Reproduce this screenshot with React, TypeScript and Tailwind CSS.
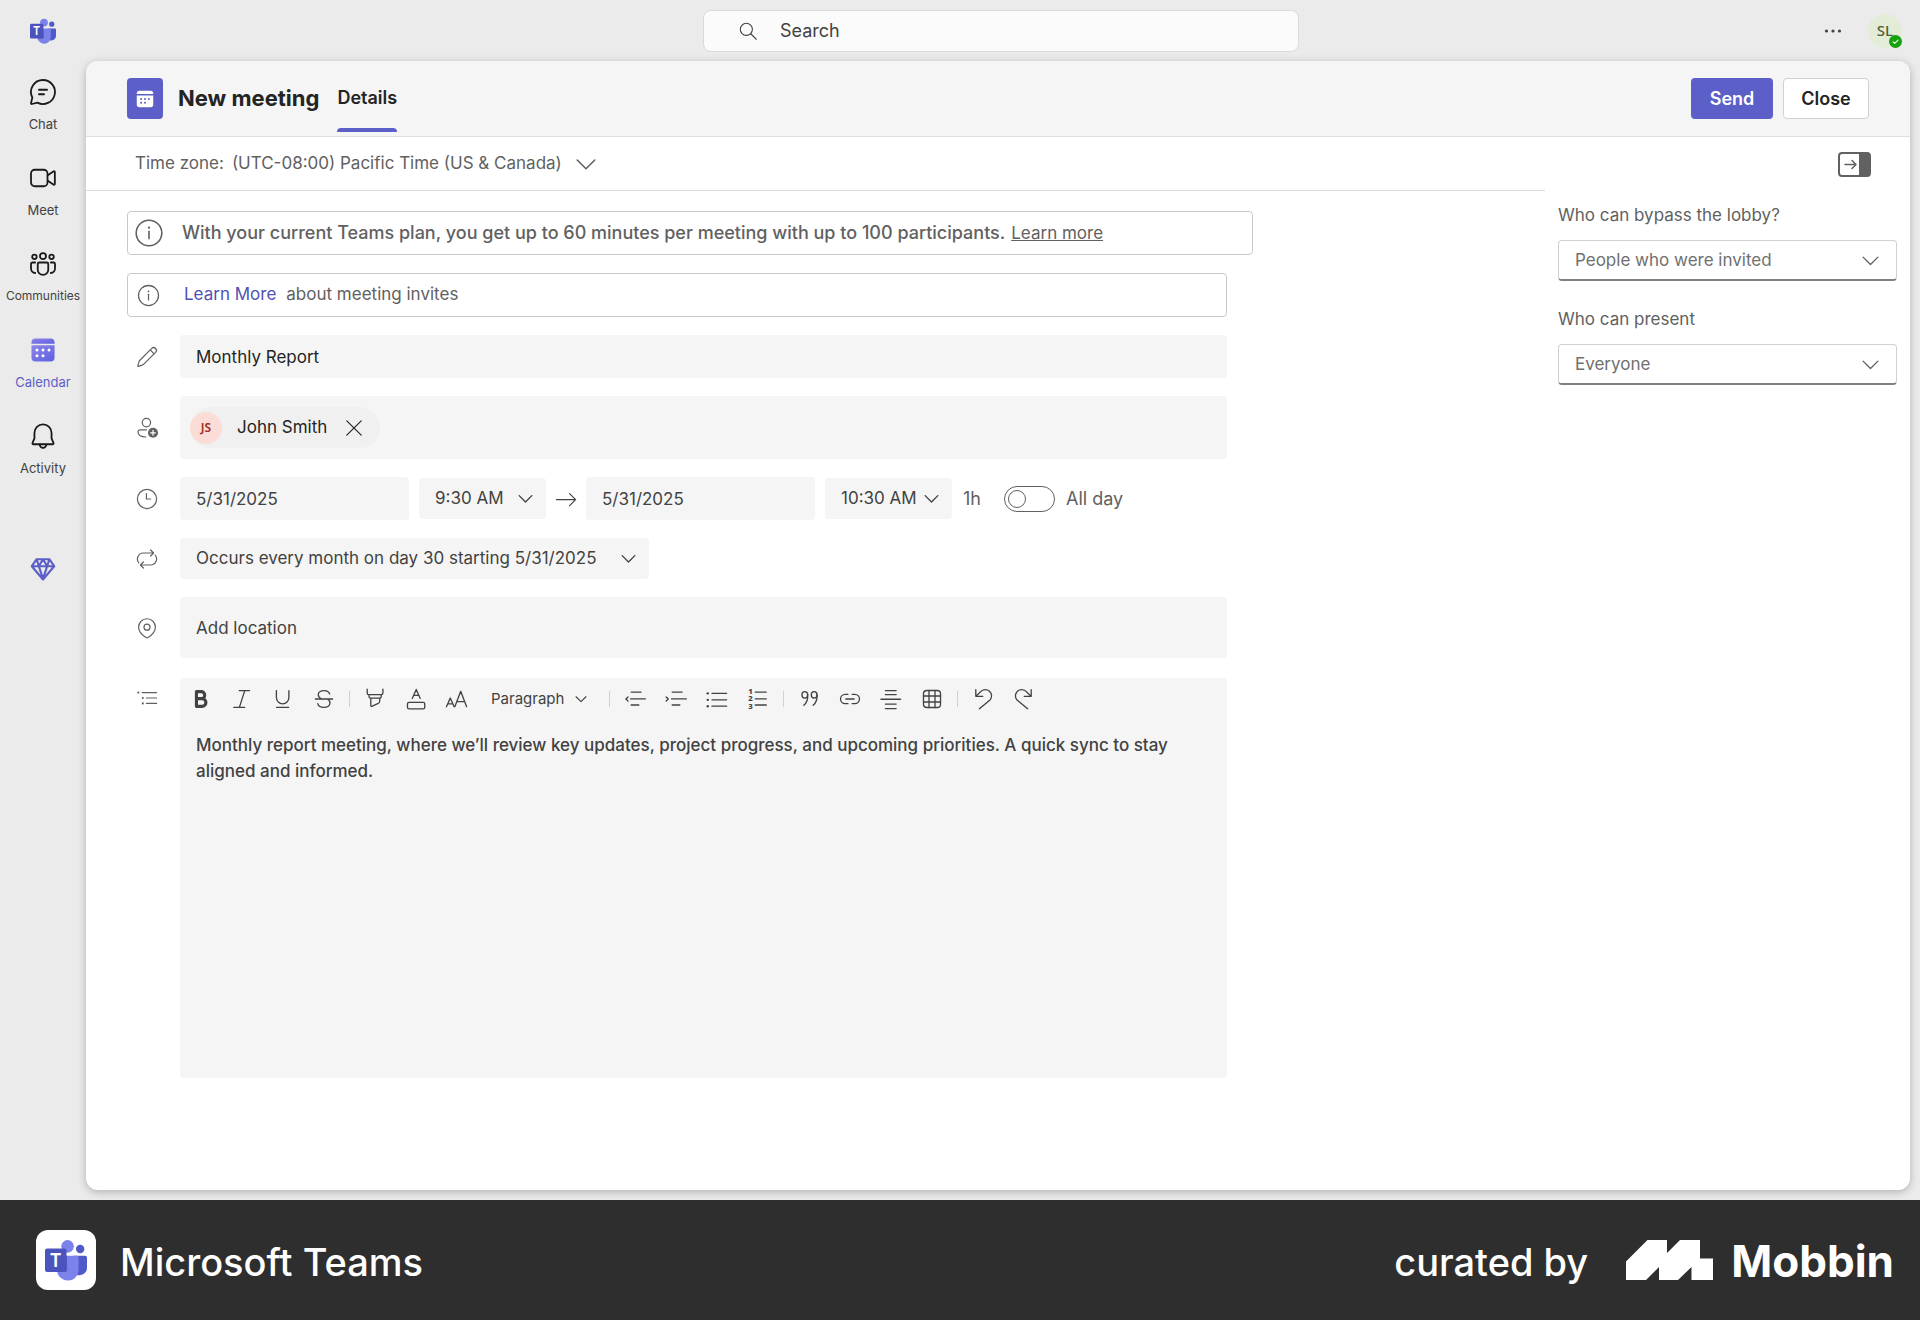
import React, { useState } from 'react';

type IconProps = { className?: string; children?: React.ReactNode; size?: number; box?: number; stroke?: number };

// Base for the line icons, drawn on a 20 unit grid
function Icon({ className = '', children, size = 24, box = 20, stroke = 1 }: IconProps) {
    return (
        <svg
            width={size}
            height={size}
            viewBox={`0 0 ${box} ${box}`}
            fill="none"
            stroke="currentColor"
            strokeWidth={stroke}
            strokeLinecap="round"
            strokeLinejoin="round"
            className={`shrink-0 ${className}`}
            aria-hidden="true"
        >
            {children}
        </svg>
    );
}

function ChevronIcon({ size = 20, className = '' }: { size?: number; className?: string }) {
    return (
        <Icon size={size} className={className} stroke={size < 24 ? 1.2 : 1}>
            <path d="M4.5 7.5 10 13l5.5-5.5" />
        </Icon>
    );
}

function InfoIcon({ size }: { size: number }) {
    return (
        <Icon size={size} className="text-[#616161]">
            <circle cx="10" cy="10" r="8" />
            <path d="M10 9v4.5" />
            <circle cx="10" cy="6.7" r="0.7" fill="currentColor" stroke="none" />
        </Icon>
    );
}

function TeamsLogo({ size }: { size: number }) {
    return (
        <svg width={size} height={size} viewBox="0 0 40 40" aria-hidden="true">
            <circle cx="33.5" cy="9.5" r="4" fill="#5059c9" />
            <path d="M27 16h11.2c1 0 1.8.8 1.8 1.8v9.7a7 7 0 0 1-7 7h-1.5c-2.5 0-4.5-2-4.5-4.5z" fill="#5059c9" />
            <circle cx="21.5" cy="7" r="6" fill="#7b83eb" />
            <path d="M12 16h18.2c1 0 1.8.8 1.8 1.8V29a10.3 10.3 0 0 1-20.6.5z" fill="#7b83eb" />
            <path d="M12 16h9v13.5c0 1.2-.9 2-2 2h-7.5z" fill="#3d449c" opacity=".55" />
            <rect y="9" width="20.5" height="22.5" rx="2" fill="#4b53bc" />
            <text x="10.2" y="26.5" textAnchor="middle" fontFamily="Noto Sans, sans-serif" fontWeight="600" fontSize="18" fill="#fff">T</text>
        </svg>
    );
}

/* ── Left rail ── */

const RAIL_ITEMS = [
    {
        label: 'Chat',
        icon: (
            <Icon size={30} stroke={1.2}>
                <path d="M10 2a8 8 0 1 1-3.7 15.1L2.6 18a.5.5 0 0 1-.6-.6l.9-3.7A8 8 0 0 1 10 2z" />
                <path d="M7.3 8.5h5.4M7.3 11.5h3.4" />
            </Icon>
        ),
    },
    {
        label: 'Meet',
        icon: (
            <Icon size={30} stroke={1.2}>
                <rect x="2" y="4.5" width="11" height="11" rx="2.5" />
                <path d="m13.2 8.2 3.7-2.6a.6.6 0 0 1 1 .5v7.8a.6.6 0 0 1-1 .5l-3.7-2.6" />
            </Icon>
        ),
    },
    {
        label: 'Communities',
        icon: (
            <Icon size={30} stroke={1.2}>
                <circle cx="10" cy="4.8" r="2" />
                <circle cx="4.3" cy="5.2" r="1.5" />
                <circle cx="15.7" cy="5.2" r="1.5" />
                <path d="M7.5 9h5c.5 0 1 .4 1 1v3.8a3.5 3.5 0 0 1-7 0V10c0-.6.5-1 1-1z" />
                <path d="M4.8 9H3c-.6 0-1 .4-1 1v3a3 3 0 0 0 2.8 3M15.2 9H17c.6 0 1 .4 1 1v3a3 3 0 0 1-2.8 3" />
            </Icon>
        ),
    },
    {
        label: 'Calendar',
        icon: (
            <svg width="30" height="30" viewBox="0 0 20 20" aria-hidden="true">
                <defs>
                    <linearGradient id="cal" x1="0" y1="0" x2="1" y2="1">
                        <stop offset="0" stopColor="#8f86e8" />
                        <stop offset="1" stopColor="#5b5fe0" />
                    </linearGradient>
                </defs>
                <path d="M2.3 5.8V5a2.6 2.6 0 0 1 2.6-2.6h10.2A2.6 2.6 0 0 1 17.7 5v.8z" fill="url(#cal)" />
                <path d="M2.3 6.9h15.4V15a2.7 2.7 0 0 1-2.7 2.7H5A2.7 2.7 0 0 1 2.3 15z" fill="url(#cal)" />
                <g fill="#fff">
                    <circle cx="6" cy="10" r="1" />
                    <circle cx="10" cy="10" r="1" />
                    <circle cx="14" cy="10" r="1" />
                    <circle cx="6" cy="13.8" r="1" />
                    <circle cx="10" cy="13.8" r="1" />
                </g>
            </svg>
        ),
    },
    {
        label: 'Activity',
        icon: (
            <Icon size={30} stroke={1.2}>
                <path d="M10 2.3a5.7 5.7 0 0 1 5.7 5.7v3.6l1.3 3c.2.4-.1.9-.6.9H3.6c-.5 0-.8-.5-.6-.9l1.3-3V8A5.7 5.7 0 0 1 10 2.3z" />
                <path d="M7.8 15.7a2.2 2.2 0 0 0 4.4 0" />
            </Icon>
        ),
    },
];

function Rail() {
    return (
        <nav className="flex w-[86px] shrink-0 flex-col items-center gap-[33px] pt-[18px]" aria-label="Apps">
            {RAIL_ITEMS.map(item => {
                const active = item.label === 'Calendar';
                const size = item.label.length > 10 ? 'text-xs' : 'text-[13px]';
                return (
                    <button
                        key={item.label}
                        type="button"
                        aria-current={active ? 'page' : undefined}
                        className={`flex h-[53px] flex-col items-center justify-between ${size} ${active ? 'text-[#5b5fc7]' : 'text-[#424242]'}`}
                    >
                        <span className={`flex h-[26px] items-center ${active ? '' : 'text-[#1a1a1a]'}`}>{item.icon}</span>
                        <span className="leading-4">{item.label}</span>
                    </button>
                );
            })}
            <button type="button" aria-label="Premium" className="mt-[46px] text-[#5b5fc7]">
                <Icon size={28} stroke={1.5}>
                    <path d="M5.5 3h9L18 8l-8 9.5L2 8zM2 8h16M7 8l3 9 3-9M5.5 3 7 8l3-5 3 5 1.5-5" />
                </Icon>
            </button>
        </nav>
    );
}

/* ── Top bar ── */

function TopBar() {
    return (
        <header className="flex h-[61px] shrink-0 items-center">
            <div className="flex w-[86px] shrink-0 justify-center">
                <TeamsLogo size={26} />
            </div>
            <div className="grid flex-1 grid-cols-[1fr_minmax(0,596px)_1fr] items-center pr-1">
                <label className="col-start-2 flex h-[42px] items-center rounded-lg border border-[#dadada] bg-[#fbfbfb] pl-[33px]">
                    <Icon size={22} className="text-[#424242]">
                        <circle cx="8.5" cy="8.5" r="5.5" />
                        <path d="m12.5 12.5 5 5" />
                    </Icon>
                    <input
                        type="search"
                        aria-label="Search"
                        placeholder="Search"
                        className="ml-[21px] min-w-0 flex-1 bg-transparent text-[18px] outline-none placeholder:text-[#424242]"
                    />
                </label>
                <div className="flex items-center justify-end gap-[26px] pr-[14px]">
                    <button type="button" aria-label="Settings and more" className="text-[#424242]">
                        <svg width="18" height="18" viewBox="0 0 18 18" fill="currentColor" aria-hidden="true">
                            <circle cx="2.5" cy="9" r="1.6" />
                            <circle cx="9" cy="9" r="1.6" />
                            <circle cx="15.5" cy="9" r="1.6" />
                        </svg>
                    </button>
                    <button
                        type="button"
                        aria-label="Account"
                        className="relative flex h-[34px] w-[34px] items-center justify-center rounded-full bg-[#e3ecd7] font-['Noto_Sans',sans-serif] text-[15px] font-medium text-[#4c6033]"
                    >
                        SL
                        <span className="absolute right-0 bottom-0 flex h-[13px] w-[13px] items-center justify-center rounded-full bg-[#13a10e] text-white">
                            <Icon size={11} stroke={2}>
                                <path d="m5.5 10.5 3 3 6-6" />
                            </Icon>
                        </span>
                    </button>
                </div>
            </div>
        </header>
    );
}

/* ── Form pieces ── */

type RowProps = { icon: React.ReactNode; children: React.ReactNode; top?: boolean };

function Row({ icon, children, top = false }: RowProps) {
    return (
        <div className={`flex ${top ? 'items-start pt-0.5' : 'items-center'}`}>
            <div className={`w-[53px] shrink-0 pl-2 text-[#616161] ${top ? 'pt-2' : ''}`}>{icon}</div>
            {children}
        </div>
    );
}

type PickerProps = { label: string; options: string[]; className: string };

function Picker({ label, options, className }: PickerProps) {
    return (
        <div className={`relative h-[41px] ${className}`}>
            <select aria-label={label} className="h-full w-full appearance-none rounded bg-[#f5f5f5] pl-4 text-[#424242]">
                {options.map(o => <option key={o}>{o}</option>)}
            </select>
            <ChevronIcon size={23} className="pointer-events-none absolute top-[9px] right-[9px] text-[#424242]" />
        </div>
    );
}

function Divider() {
    return (
        <span className="flex w-[10px] shrink-0 justify-center">
            <span className="h-4 w-px bg-[#d1d1d1]" />
        </span>
    );
}

function Tool({ label, children }: { label: string; children: React.ReactNode }) {
    return (
        <button type="button" aria-label={label} className="flex h-[42px] w-[41px] shrink-0 items-center justify-center">
            <Icon size={24} stroke={1.1}>{children}</Icon>
        </button>
    );
}

function Glyph({ x, y, children }: { x: number; y: number; children: string }) {
    return (
        <text x={x} y={y} fontSize={6.5} fontWeight={800} textAnchor="middle" fontFamily="Noto Sans, sans-serif" fill="currentColor" stroke="none">
            {children}
        </text>
    );
}

function Toolbar() {
    return (
        <div className="flex h-[42px] items-center text-[#424242]">
            <Tool label="Bold">
                <path strokeWidth="2.6" d="M6.2 3.9h4a2.9 2.9 0 0 1 0 5.8h-4zM6.2 9.7h4.7a3.2 3.2 0 0 1 0 6.4H6.2z" />
            </Tool>
            <Tool label="Italic"><path d="M7.7 3H16.3M3.2 17h9M12.3 3 7.8 17" /></Tool>
            <Tool label="Underline"><path d="M4.5 3v5.8a5.2 5.2 0 0 0 10.4 0V3M4.7 17h10" /></Tool>
            <Tool label="Strikethrough">
                <path d="M14.8 5.8C14.2 4 12.3 3 10 3 7.3 3 5.2 4.3 5.2 6.5c0 1.6 1.1 2.7 2.9 3.5M2.8 10h14.4M4.8 13.8c.5 2.1 2.5 3.2 5.2 3.2 2.9 0 5-1.3 5-3.6 0-1.6-.8-2.6-2.2-3.4" />
            </Tool>
            <Divider />
            <Tool label="Highlight">
                <path d="M3.5 1.8v3.2c0 .7.5 1.3 1.3 1.3h10.5c.8 0 1.3-.6 1.3-1.3V1.8M5 6.3v1.6c0 .7.5 1.3 1.3 1.3h7.6c.8 0 1.3-.6 1.3-1.3V6.3M6.5 9.3v6.2c0 .5.5.8.9.6l5.3-2.4c.6-.3 1-.8 1.1-1.4l.3-3" />
            </Tool>
            <Tool label="Font color">
                <path d="m6.9 9.5 3.3-7.5 3.3 7.5M8 7h4.4" />
                <rect x="2.9" y="12.8" width="14.4" height="5.4" rx="1.3" />
            </Tool>
            <Tool label="Font size">
                <path d="m1.2 16.4 3.2-7.2 3.2 7.2M2.3 14h4.2M8.2 16.4l4.9-12.8L18 16.4M9.9 12.2h6.4" />
            </Tool>
            <button type="button" className="flex w-[127px] shrink-0 items-center pl-[14px] text-[15px]">
                Paragraph
                <ChevronIcon size={18} className="ml-2" />
            </button>
            <Divider />
            <Tool label="Decrease indent"><path d="M6.8 4.2h8.3M6.3 9.9h12.3M6.8 15h6.4M4.2 8.3 2.4 10l1.8 1.7" /></Tool>
            <Tool label="Increase indent"><path d="M6.8 4.2h8.3M6.3 9.9h12.3M6.8 15h6.4M1.8 8.3 3.6 10l-1.8 1.7" /></Tool>
            <Tool label="Bulleted list">
                <path d="M5.8 5.3H18M5.8 10.7H18M5.8 16H18" />
                <g fill="currentColor" stroke="none">
                    <circle cx="2.3" cy="5.3" r="1" />
                    <circle cx="2.3" cy="10.7" r="1" />
                    <circle cx="2.3" cy="16" r="1" />
                </g>
            </Tool>
            <Tool label="Numbered list">
                <path d="M7.7 4.2h9.2M7.7 9.9h9.2M7.7 15h9.2" />
                <Glyph x={3.7} y={5.8}>1</Glyph>
                <Glyph x={3.7} y={12}>2</Glyph>
                <Glyph x={3.7} y={18.3}>3</Glyph>
            </Tool>
            <Divider />
            <Tool label="Quote">
                <ellipse cx="6.5" cy="6.5" rx="2.4" ry="2.7" />
                <path d="M8.9 6.3c.3 3.7-.9 7-3.2 9" />
                <ellipse cx="14.3" cy="6.5" rx="2.4" ry="2.7" />
                <path d="M16.7 6.3c.3 3.7-.9 7-3.2 9" />
            </Tool>
            <Tool label="Insert link">
                <path d="M8.3 6.1H6a3.9 3.9 0 0 0 0 7.8h2.3M11.8 6.1H14a3.9 3.9 0 0 1 0 7.8h-2.2M6.5 10h7" />
            </Tool>
            <Tool label="Insert horizontal rule">
                <path d="M5.3 3h9M5.3 6.3h9M5.3 14.2h9M5.3 18h9" />
                <path strokeWidth="1.4" d="M1.8 10.2h16" />
            </Tool>
            <Tool label="Insert table">
                <rect x="2.9" y="2.9" width="14.2" height="14.2" rx="2.8" />
                <path d="M7.5 2.9v14.2M12.5 2.9v14.2M2.9 7.5h14.2M2.9 12.5h14.2" />
            </Tool>
            <Divider />
            <Tool label="Undo">
                <path d="M4 2.2v5.6h5.8M4.2 7.6 8 3.9a5.2 5.2 0 0 1 7.8 7L7 18.2" />
            </Tool>
            <Tool label="Redo">
                <path d="M16 2.2v5.6h-5.8M15.8 7.6 12 3.9a5.2 5.2 0 0 0-7.8 7L13 18.2" />
            </Tool>
        </div>
    );
}

const DESCRIPTION =
    'Monthly report meeting, where we’ll review key updates, project progress, and upcoming priorities. A quick sync to stay aligned and informed.';

function MeetingForm() {
    const [title, setTitle] = useState('Monthly Report');
    const [startDate, setStartDate] = useState('5/31/2025');
    const [endDate, setEndDate] = useState('5/31/2025');
    const [description, setDescription] = useState(DESCRIPTION);
    const [allDay, setAllDay] = useState(false);

    return (
        <form className="flex flex-col gap-[18px] py-5 pl-[41px] text-[17px]" onSubmit={e => e.preventDefault()}>
            {/* Notices */}
            <div className="flex h-11 max-w-[1126px] items-center rounded border border-[#c9c9c9] pl-[5px] text-[#616161]">
                <InfoIcon size={32} />
                <p className="ml-[17px] whitespace-nowrap text-[18px] font-medium">
                    With your current Teams plan, you get up to 60 minutes per meeting with up to 100 participants.
                    <a href="#plans" className="ml-[6px] text-[17px] font-normal underline">Learn more</a>
                </p>
            </div>
            <div className="flex h-11 max-w-[1100px] items-center rounded border border-[#c9c9c9] pl-2 text-[#616161]">
                <InfoIcon size={25} />
                <p className="ml-[23px]">
                    <a href="#invites" className="mr-[10px] text-[#4f52b2]">Learn More</a>
                    about meeting invites
                </p>
            </div>

            <div className="flex max-w-[1100px] flex-col gap-[18px]">
                <Row icon={<Icon><path d="M12.7 4.1 4.1 12.7c-.4.4-.6.8-.8 1.3l-1 3.4c0 .2.2.4.4.4l3.3-1c.5-.2 1-.4 1.3-.8l8.6-8.6M12.7 4.1l1.3-1.3a2.3 2.3 0 0 1 3.2 3.3l-1.3 1.3M12.7 4.1l3.2 3.3" /></Icon>}>
                    <input
                        aria-label="Title"
                        value={title}
                        onChange={e => setTitle(e.target.value)}
                        className="h-[43px] min-w-0 flex-1 rounded bg-[#f5f5f5] px-4 text-[#242424]"
                    />
                </Row>

                <Row
                    icon={
                        <Icon>
                            <circle cx="9.5" cy="5.5" r="3.5" />
                            <path d="M9.5 11.5H4.2c-.9 0-1.7.8-1.7 1.7 0 2.7 2.7 4.3 6.5 4.3" />
                            <circle cx="15" cy="14" r="4.2" fill="currentColor" stroke="none" />
                            <path d="M15 12v4M13 14h4" stroke="#fff" />
                        </Icon>
                    }
                >
                    <div className="flex h-[63px] min-w-0 flex-1 items-center rounded bg-[#f5f5f5] pl-[10px]">
                        <div className="flex h-[41px] items-center rounded-full bg-[#f0f0f0] pr-[14px] text-[#242424]">
                            <span className="flex h-8 w-8 items-center justify-center rounded-full bg-[#fcdcd7] font-['Noto_Sans',sans-serif] text-[12px] font-semibold text-[#9c2b20]">JS</span>
                            <span className="ml-[15px]">John Smith</span>
                            <button type="button" aria-label="Remove John Smith" className="ml-[15px]">
                                <Icon><path d="m4 4 12 12M16 4 4 16" /></Icon>
                            </button>
                        </div>
                    </div>
                </Row>

                <Row icon={<Icon><circle cx="10" cy="10" r="8" /><path d="M9.5 5.5V10H13" /></Icon>}>
                    <div className="flex flex-1 items-center text-[#424242]">
                        <input
                            aria-label="Start date"
                            value={startDate}
                            onChange={e => setStartDate(e.target.value)}
                            className="h-[43px] w-[229px] rounded bg-[#f5f5f5] px-4"
                        />
                        <Picker label="Start time" options={['9:30 AM', '10:00 AM']} className="ml-[10px] w-[127px]" />
                        <Icon className="mx-2 text-[#424242]"><path d="M2 10.5h16M13 5.5l5 5-5 5" /></Icon>
                        <input
                            aria-label="End date"
                            value={endDate}
                            onChange={e => setEndDate(e.target.value)}
                            className="h-[43px] w-[229px] rounded bg-[#f5f5f5] px-4"
                        />
                        <Picker label="End time" options={['10:30 AM', '11:00 AM']} className="ml-[10px] w-[127px]" />
                        <span className="ml-[11px] w-[41px] text-[18px] text-[#616161]">1h</span>
                        <label className="flex items-center gap-[11px] text-[18px] text-[#616161]">
                            <input
                                type="checkbox"
                                role="switch"
                                checked={allDay}
                                onChange={e => setAllDay(e.target.checked)}
                                className="peer sr-only"
                            />
                            <span className="flex h-[26px] w-[51px] items-center rounded-full border border-[#616161] px-[3px] peer-checked:justify-end">
                                <span className="h-[18px] w-[18px] rounded-full border border-[#616161]" />
                            </span>
                            All day
                        </label>
                    </div>
                </Row>

                <Row
                    icon={
                        <Icon>
                            <path d="M13 2.5 15.5 5 13 7.5M15.5 5H7a5 5 0 0 0-3.8 8.2M7 17.5 4.5 15 7 12.5M4.5 15H13a5 5 0 0 0 3.8-8.2" />
                        </Icon>
                    }
                >
                    <Picker label="Recurrence" options={['Occurs every month on day 30 starting 5/31/2025']} className="w-[469px]" />
                </Row>

                <Row
                    icon={
                        <Icon>
                            <path d="M10 2.3a7 7 0 0 1 7 7c0 3.2-2.1 6-6.3 8.7a1.2 1.2 0 0 1-1.4 0C5.1 15.3 3 12.5 3 9.3a7 7 0 0 1 7-7z" />
                            <circle cx="10" cy="9.3" r="2.5" />
                        </Icon>
                    }
                >
                    <input
                        aria-label="Location"
                        placeholder="Add location"
                        className="h-[61px] min-w-0 flex-1 rounded bg-[#f5f5f5] px-4 placeholder:text-[#424242]"
                    />
                </Row>

                <Row
                    top
                    icon={
                        <Icon>
                            <path d="M6 5.5h12M9.5 10H18M9.5 14.5H18" />
                            <g fill="currentColor" stroke="none">
                                <circle cx="2.8" cy="5.5" r=".9" />
                                <circle cx="6.5" cy="10" r=".9" />
                                <circle cx="6.5" cy="14.5" r=".9" />
                            </g>
                        </Icon>
                    }
                >
                    <div className="min-w-0 flex-1 rounded bg-[#f5f5f5]">
                        <Toolbar />
                        <textarea
                            aria-label="Description"
                            value={description}
                            onChange={e => setDescription(e.target.value)}
                            className="block h-[358px] w-full resize-none bg-transparent px-4 pt-3 leading-[26px] font-medium text-[#424242]"
                        />
                    </div>
                </Row>
            </div>
        </form>
    );
}

const OPTIONS = [
    { id: 'lobby', label: 'Who can bypass the lobby?', values: ['People who were invited', 'Everyone'] },
    { id: 'present', label: 'Who can present', values: ['Everyone', 'Only organizers'] },
];

function OptionsPanel() {
    return (
        <aside className="w-[365px] shrink-0 px-[13px]">
            <div className="flex h-[54px] items-center justify-end pr-[26px]">
                <button type="button" aria-label="Hide options">
                    <svg width="33" height="25" viewBox="0 0 33 25" fill="none" aria-hidden="true" className="text-[#616161]">
                        <rect x="1" y="1" width="31" height="23" rx="3" stroke="currentColor" strokeWidth="2" />
                        <path d="M21 1h8a3 3 0 0 1 3 3v17a3 3 0 0 1-3 3h-8z" fill="currentColor" />
                        <path d="M7 12.5h11M14 8.5l4 4-4 4" stroke="currentColor" strokeWidth="1.5" strokeLinecap="round" strokeLinejoin="round" />
                    </svg>
                </button>
            </div>
            <div className="flex flex-col gap-[26px] pt-3 text-[17px] leading-6">
                {OPTIONS.map(o => (
                    <div key={o.id} className="flex flex-col gap-[13px]">
                        <label htmlFor={o.id} className="text-[#616161]">{o.label}</label>
                        <div className="relative">
                            <select id={o.id} className="h-[41px] w-full appearance-none rounded border border-[#d1d1d1] border-b-2 border-b-[#808080] bg-white pl-4 text-[#707070]">
                                {o.values.map(v => <option key={v}>{v}</option>)}
                            </select>
                            <ChevronIcon size={27} className="pointer-events-none absolute top-[7px] right-[13px] text-[#616161]" />
                        </div>
                    </div>
                ))}
            </div>
        </aside>
    );
}

function Footer() {
    return (
        <footer className="flex h-[120px] shrink-0 items-center bg-[#2e2e2e] pr-[26px] pl-9 text-[38px] font-medium text-white">
            <span className="flex h-[60px] w-[60px] items-center justify-center rounded-xl bg-white">
                <TeamsLogo size={42} />
            </span>
            <span className="ml-6 pt-1">Microsoft Teams</span>
            <span className="ml-auto pt-1">curated by</span>
            <svg width="88" height="40" viewBox="0 0 88 40" fill="#fff" aria-hidden="true" className="ml-[38px]">
                <path d="M0 21.5 21.5 0H41v13L54 0h20v18.5h13V40H65.5V27L52 40H33V27L20 40H0z" />
            </svg>
            <span className="ml-[17px] pt-0.5 text-[44px] font-bold">Mobbin</span>
        </footer>
    );
}

export default function App() {
    return (
        <div className="flex min-h-screen flex-col bg-[#ebebeb] font-[Inter,'Liberation_Sans',sans-serif]">
            <TopBar />
            <div className="flex flex-1 pr-[10px] pb-[10px]">
                <Rail />
                <main className="flex min-w-0 flex-1 flex-col overflow-hidden rounded-xl bg-white shadow-[0_2px_8px_rgba(0,0,0,0.25)]">
                    {/* Page header */}
                    <div className="flex h-[76px] items-center border-b border-[#e0e0e0] bg-[#f5f5f5] px-[41px]">
                        <span className="flex h-[41px] w-9 items-center justify-center rounded bg-[#5b5fc7] text-white">
                            <svg width="22" height="22" viewBox="0 0 20 20" fill="currentColor" aria-hidden="true">
                                <path d="M2.5 5.5V5A2.5 2.5 0 0 1 5 2.5h10A2.5 2.5 0 0 1 17.5 5v.5zM2.5 6.8h15V15a2.5 2.5 0 0 1-2.5 2.5H5A2.5 2.5 0 0 1 2.5 15z" />
                                <g fill="#5b5fc7">
                                    <circle cx="6.5" cy="10" r=".9" />
                                    <circle cx="10" cy="10" r=".9" />
                                    <circle cx="13.5" cy="10" r=".9" />
                                    <circle cx="6.5" cy="13.5" r=".9" />
                                    <circle cx="10" cy="13.5" r=".9" />
                                </g>
                            </svg>
                        </span>
                        <h1 className="ml-[15px] text-[22px] font-bold text-[#242424]">New meeting</h1>
                        <button type="button" role="tab" aria-selected="true" className="ml-[18px] flex h-full flex-col justify-between pb-1 text-[18px] font-semibold text-[#242424]">
                            <span className="pt-[23px]">Details</span>
                            <span className="h-1 w-full rounded-t bg-[#5b5fc7]" />
                        </button>
                        <div className="ml-auto flex gap-[10px] text-[18px] font-semibold">
                            <button type="button" className="h-[41px] w-[82px] rounded bg-[#5b5fc7] text-white">Send</button>
                            <button type="button" className="h-[41px] w-[86px] rounded border border-[#d1d1d1] bg-white text-[#242424]">Close</button>
                        </div>
                    </div>

                    <div className="flex flex-1">
                        <div className="min-w-0 flex-1">
                            <div className="flex h-[54px] items-center border-b border-[#dcdcdc] pl-[49px] text-[17px] text-[#616161]">
                                <button type="button" className="flex items-center gap-2">
                                    <span>Time zone:</span>
                                    <span>(UTC-08:00) Pacific Time (US &amp; Canada)</span>
                                    <ChevronIcon size={32} />
                                </button>
                            </div>
                            <MeetingForm />
                        </div>
                        <OptionsPanel />
                    </div>
                </main>
            </div>
            <Footer />
        </div>
    );
}
